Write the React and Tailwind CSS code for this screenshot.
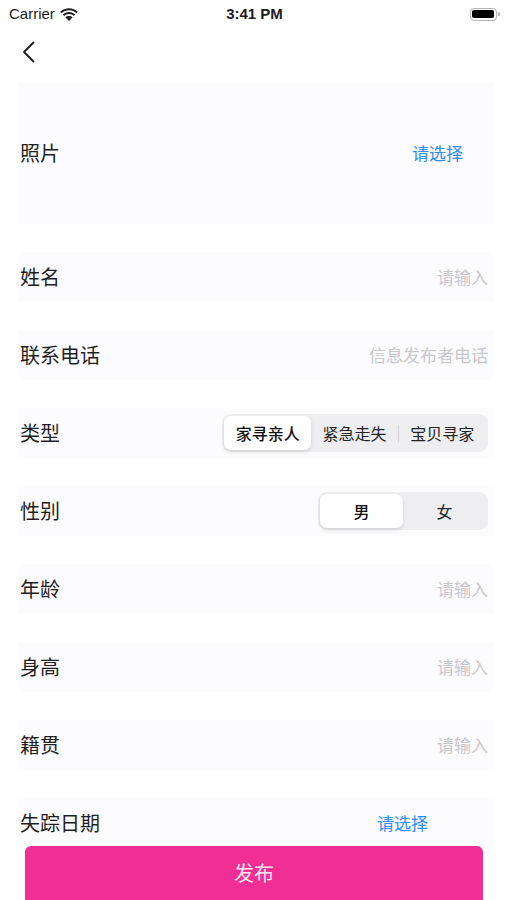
import React from 'react'

const cjk = { fontFamily: '"Noto Sans CJK SC", "Noto Sans", sans-serif' }

function StatusBar() {
    return (
        <div className='h-[28px] flex items-center justify-between pl-[9px] pr-[7px] text-[#1c1c1e]' style={{ fontFamily: '"Liberation Sans", Arial, sans-serif' }}>
            <div className='flex items-center gap-[5px] w-[120px]'>
                <span className='text-[15px]'>Carrier</span>
                <svg width="18" height="13" viewBox="0 0 18 13">
                    <path d="M9 2.2c2.9 0 5.5 1.1 7.5 3l1.3-1.4C15.4 1.6 12.3.3 9 .3S2.6 1.6.2 3.8l1.3 1.4c2-1.9 4.6-3 7.5-3z" fill="#1c1c1e" />
                    <path d="M9 6c1.9 0 3.6.7 4.9 1.9l1.3-1.4C13.6 5 11.4 4.1 9 4.1S4.4 5 2.8 6.5l1.3 1.4C5.4 6.7 7.1 6 9 6z" fill="#1c1c1e" />
                    <path d="M9 9.8c.9 0 1.7.3 2.3.9L9 13l-2.3-2.3c.6-.6 1.4-.9 2.3-.9z" fill="#1c1c1e" />
                    <path d="M9 7.9c1.4 0 2.6.5 3.6 1.4l-1.3 1.4c-.6-.6-1.4-.9-2.3-.9s-1.7.3-2.3.9L5.4 9.3c1-.9 2.2-1.4 3.6-1.4z" fill="#1c1c1e" />
                </svg>
            </div>
            <span className='text-[15px] font-bold'>3:41 PM</span>
            <div className='w-[120px] flex justify-end'>
                <div className='flex items-center'>
                    <div className='w-[27px] h-[13px] rounded-[4px] border-[1.5px] border-[#b5b5b8] p-[1.5px]'>
                        <div className='w-full h-full rounded-[2px] bg-black' />
                    </div>
                    <div className='w-[2px] h-[4px] rounded-r-[1px] bg-[#b5b5b8] ml-[1px]' />
                </div>
            </div>
        </div>
    )
}

function Segmented({ options, selected, widthClass, dividerAfter }) {
    return (
        <div className={`flex h-[38px] p-[2px] rounded-[9px] bg-[#eeeef0] ${widthClass}`}>
            {options.map((o, i) => (
                <div key={o} className='flex-1 flex items-center'>
                    <div className={`flex-1 h-full flex items-center justify-center text-[16px] rounded-[7px] ${
                        i === selected ? 'bg-white shadow-[0_2px_4px_rgba(0,0,0,0.12)] font-medium text-[#111]' : 'text-[#222]'
                    }`}>
                        {o}
                    </div>
                    {i === dividerAfter && <div className='w-[1px] h-[17px] bg-[#d4d4d8]' />}
                </div>
            ))}
        </div>
    )
}

function Row({ label, children, pr = 'pr-[6px]' }) {
    return (
        <div className={`mt-[28px] h-[50px] flex items-center justify-between bg-[#fcfbfe] pl-[2px] ${pr}`}>
            <span className='text-[20px] text-[#1f1f1f]'>{label}</span>
            {children}
        </div>
    )
}

const Placeholder = ({ text }) => <span className='text-[17px] text-[#c7c7cc]'>{text}</span>

export default function App() {
    return (
        <div className='relative h-[900px] overflow-hidden bg-white' style={cjk}>
            <StatusBar />
            <div className='h-[48px] flex items-center pl-[22px]'>
                <svg width="13" height="22" viewBox="0 0 13 22" fill="none">
                    <path d="M11.5 1.5L2 11l9.5 9.5" stroke="#1c1c1e" strokeWidth="1.8" strokeLinecap="round" strokeLinejoin="round" />
                </svg>
            </div>

            <div className='pt-[6px] ml-[18px] mr-[13px]'>
                <div className='h-[142px] flex items-center justify-between bg-[#fcfbfe] pl-[2px] pr-[31px]'>
                    <span className='text-[20px] text-[#1f1f1f]'>照片</span>
                    <span className='text-[17px] text-[#2f8ef5]'>请选择</span>
                </div>

                <Row label='姓名'><Placeholder text='请输入' /></Row>
                <Row label='联系电话'><Placeholder text='信息发布者电话' /></Row>
                <Row label='类型'>
                    <Segmented options={['家寻亲人', '紧急走失', '宝贝寻家']} selected={0} dividerAfter={1} widthClass='w-[266px]' />
                </Row>
                <Row label='性别'>
                    <Segmented options={['男', '女']} selected={0} widthClass='w-[170px]' />
                </Row>
                <Row label='年龄'><Placeholder text='请输入' /></Row>
                <Row label='身高'><Placeholder text='请输入' /></Row>
                <Row label='籍贯'><Placeholder text='请输入' /></Row>
                <Row label='失踪日期' pr='pr-[66px]'>
                    <span className='text-[17px] text-[#2f8ef5]'>请选择</span>
                </Row>
            </div>

            {/* bottom publish button sits over the form */}
            <div className='absolute left-[25px] right-[24px] top-[846px] h-[70px] rounded-[6px] bg-[#f02e96]'>
                <div className='h-[54px] flex items-center justify-center text-[20px] text-[#fde6f2]'>发布</div>
            </div>
        </div>
    )
}
